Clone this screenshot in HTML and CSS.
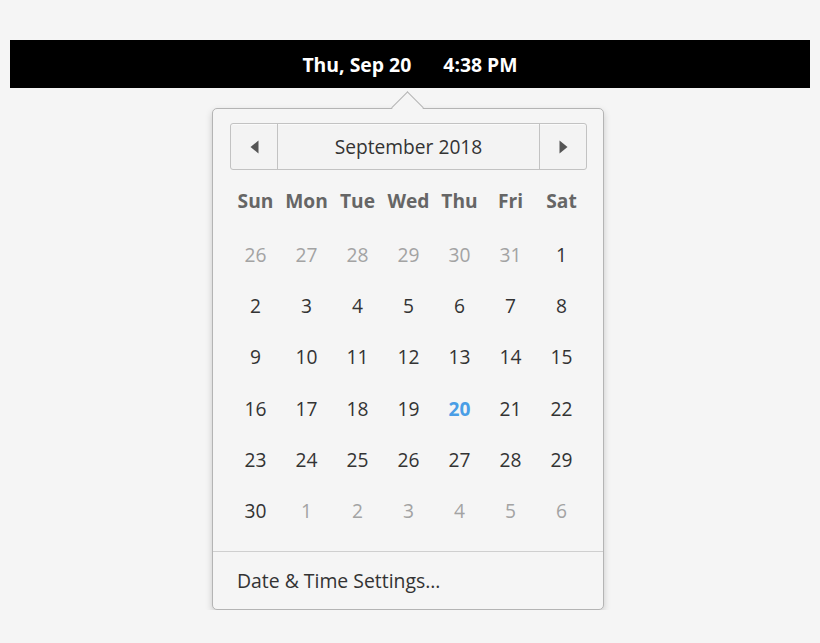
FILE: index.html
```html
<!DOCTYPE html>
<html>
<head>
<meta charset="utf-8">
<link rel="stylesheet" href="styles.css">
</head>
<body>
<div class="panel">
  <span class="panel-date">Thu, Sep 20</span>
  <span class="panel-time">4:38 PM</span>
</div>
<div class="popover">
  <div class="arrow"></div>
  <div class="content">
    <div class="month-switcher">
      <div class="nav-btn">
        <svg width="9" height="14" viewBox="0 0 9 14"><path d="M8.5 0.5 L8.5 13.5 L0.5 7 Z" fill="#555"/></svg>
      </div>
      <div class="month-label">September 2018</div>
      <div class="nav-btn">
        <svg width="9" height="14" viewBox="0 0 9 14"><path d="M0.5 0.5 L0.5 13.5 L8.5 7 Z" fill="#555"/></svg>
      </div>
    </div>
    <div class="weekdays">
      <span>Sun</span><span>Mon</span><span>Tue</span><span>Wed</span><span>Thu</span><span>Fri</span><span>Sat</span>
    </div>
    <div class="days">
      <span class="other">26</span><span class="other">27</span><span class="other">28</span><span class="other">29</span><span class="other">30</span><span class="other">31</span><span>1</span>
      <span>2</span><span>3</span><span>4</span><span>5</span><span>6</span><span>7</span><span>8</span>
      <span>9</span><span>10</span><span>11</span><span>12</span><span>13</span><span>14</span><span>15</span>
      <span>16</span><span>17</span><span>18</span><span>19</span><span class="today">20</span><span>21</span><span>22</span>
      <span>23</span><span>24</span><span>25</span><span>26</span><span>27</span><span>28</span><span>29</span>
      <span>30</span><span class="other">1</span><span class="other">2</span><span class="other">3</span><span class="other">4</span><span class="other">5</span><span class="other">6</span>
    </div>
  </div>
  <div class="footer">Date &amp; Time Settings…</div>
</div>
</body>
</html>
```
FILE: styles.css
```css
html, body {
  margin: 0;
  padding: 0;
  background: #f5f5f5;
  font-family: "Open Sans", "Noto Sans", sans-serif;
}
.panel {
  margin: 40px 10px 0;
  height: 48px;
  background: #000;
  color: #fff;
  display: flex;
  justify-content: center;
  align-items: center;
  gap: 32px;
  font-weight: 700;
  font-size: 19.4px;
}
.popover {
  position: relative;
  margin: 20px 0 0 212px;
  width: 390px;
  background: #f5f5f5;
  border: 1px solid #b4b4b4;
  border-radius: 5px;
  box-shadow: 0 3px 7px rgba(0,0,0,0.18);
}
.arrow {
  position: absolute;
  left: 183px;
  top: -13px;
  width: 22px;
  height: 22px;
  background: #f5f5f5;
  border-left: 1px solid #b4b4b4;
  border-top: 1px solid #b4b4b4;
  transform: rotate(45deg);
  transform-origin: center;
}
.content {
  position: relative;
  padding: 14px 16px 15px 17px;
}
.month-switcher {
  display: flex;
  height: 45px;
  border: 1px solid #c2c2c2;
  border-radius: 3px;
  background: #f3f3f3;
  box-shadow: 0 1px 0 rgba(255,255,255,0.6) inset;
}
.nav-btn {
  width: 46px;
  display: flex;
  align-items: center;
  justify-content: center;
}
.nav-btn:first-child { border-right: 1px solid #c2c2c2; }
.nav-btn:last-child { border-left: 1px solid #c2c2c2; }
.month-label {
  flex: 1;
  display: flex;
  align-items: center;
  justify-content: center;
  font-size: 19.2px;
  color: #333;
}
.weekdays {
  display: grid;
  grid-template-columns: repeat(7, 1fr);
  height: 54px;
  margin-top: 3px;
  align-items: center;
  justify-items: center;
  font-weight: 700;
  font-size: 19.2px;
  color: #666;
}
.days {
  display: grid;
  grid-template-columns: repeat(7, 1fr);
  grid-auto-rows: 51.2px;
  margin-top: 2px;
  align-items: center;
  justify-items: center;
  font-size: 19.2px;
  color: #333;
}
.days .other { color: #a3a3a3; }
.days .today { color: #4a9ee6; font-weight: 700; }
.footer {
  border-top: 1px solid #cfcfcf;
  height: 57px;
  display: flex;
  align-items: center;
  padding-left: 24px;
  font-size: 19.4px;
  color: #333;
}
```
